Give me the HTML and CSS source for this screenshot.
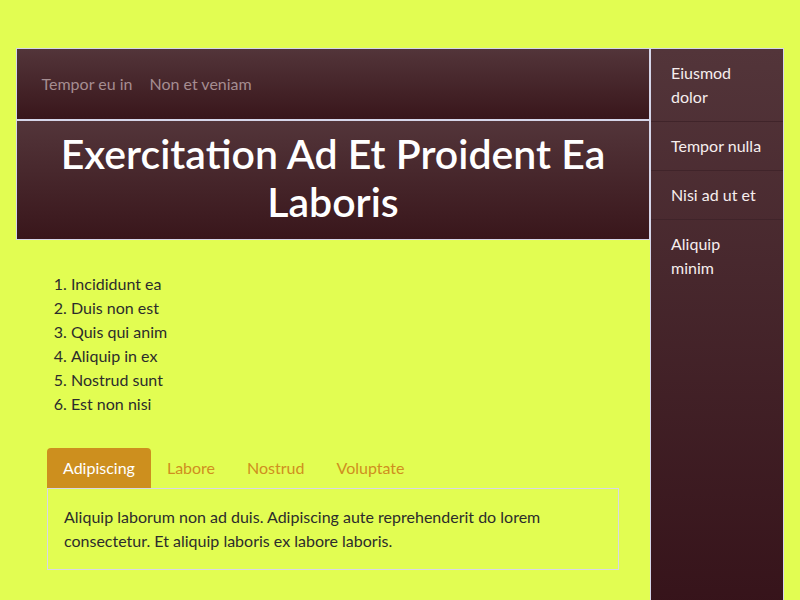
FILE: index.html
```html
<!DOCTYPE html>
<html lang="en">
<head>
<meta charset="utf-8">
<title>Exercitation Ad Et Proident Ea Laboris</title>
<link rel="stylesheet" href="styles.css">
</head>
<body>
<div class="page">
  <div class="main">
    <nav class="topnav">
      <a class="navlink" href="#">Tempor eu in</a>
      <a class="navlink" href="#">Non et veniam</a>
    </nav>
    <header class="hero">
      <h1 class="title">Exercitation Ad Et Proident Ea Laboris</h1>
    </header>
    <section class="content">
      <ol class="list">
        <li>Incididunt ea</li>
        <li>Duis non est</li>
        <li>Quis qui anim</li>
        <li>Aliquip in ex</li>
        <li>Nostrud sunt</li>
        <li>Est non nisi</li>
      </ol>
      <div class="tabs">
        <a class="tab active" href="#">Adipiscing</a>
        <a class="tab" href="#">Labore</a>
        <a class="tab" href="#">Nostrud</a>
        <a class="tab" href="#">Voluptate</a>
      </div>
      <div class="tabpanel">
        <p>Aliquip laborum non ad duis. Adipiscing aute reprehenderit do lorem consectetur. Et aliquip laboris ex labore laboris.</p>
      </div>
    </section>
  </div>
  <aside class="sidebar">
    <a class="sidelink" href="#">Eiusmod dolor</a>
    <a class="sidelink" href="#">Tempor nulla</a>
    <a class="sidelink" href="#">Nisi ad ut et</a>
    <a class="sidelink" href="#">Aliquip minim</a>
  </aside>
</div>
</body>
</html>
```
FILE: styles.css
```css
html, body {
  margin: 0;
  padding: 0;
  background: #e2fd52;
}
body {
  font-family: "Lato", "Open Sans", sans-serif;
  font-size: 16px;
  line-height: 24px;
  color: #2c2c2c;
}
a { text-decoration: none; }

.page {
  display: grid;
  grid-template-columns: 634px 134px;
  padding: 48px 0 0 16px;
}

.main {
  display: flex;
  flex-direction: column;
}

.topnav {
  display: flex;
  align-items: center;
  height: 70px;
  padding: 0 16px;
  border: 1px solid #d6d6ea;
  background: linear-gradient(to bottom, #53353a, #39161b);
}
.navlink {
  color: #a58d91;
  padding: 0 8.5px;
}

.hero {
  border: 1px solid #d6d6ea;
  background: linear-gradient(to bottom, #53353a, #39161b);
  padding: 9px 16px 13px;
}
.title {
  margin: 0;
  color: #ffffff;
  font-size: 41px;
  line-height: 48px;
  font-weight: 600;
  text-align: center;
}

.content {
  padding: 32px 31px 31px 31px;
}
.list {
  margin: 0 0 32px 0;
  padding-left: 24px;
}

.tabs {
  display: flex;
}
.tab {
  padding: 8px 16px;
  color: #cf8f1f;
  border-radius: 4px 4px 0 0;
}
.tab.active {
  background: #cd8f1e;
  color: #ffffff;
}

.tabpanel {
  border: 1px solid #d8d8e6;
  padding: 16px;
}
.tabpanel p {
  margin: 0;
}

.sidebar {
  display: flex;
  flex-direction: column;
  border: 1px solid #d6d6ea;
  border-bottom: 0;
  background: linear-gradient(to bottom, #53353a, #36131a 560px);
}
.sidelink {
  color: #f6eeee;
  padding: 12px 20px;
  border-bottom: 1px solid #40242a;
}
.sidelink:last-child {
  border-bottom: 0;
}
```
